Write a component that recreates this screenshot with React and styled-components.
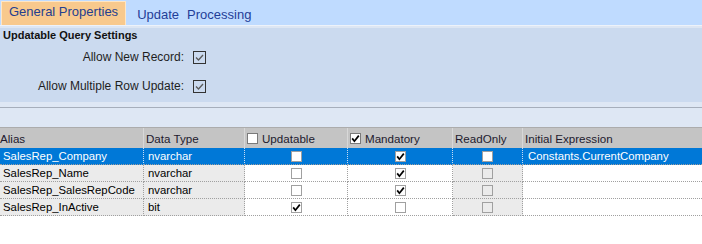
import React from "react"
import styled, { createGlobalStyle } from "styled-components"

const GlobalStyle = createGlobalStyle`
  html, body {
    margin: 0;
    padding: 0;
    background: #ffffff;
  }
  body {
    font-family: "Liberation Sans", Arial, sans-serif;
    width: 702px;
    height: 244px;
    overflow: hidden;
  }
`

const columns = "144px 101px 103px 105px 70px 1fr"

const rows = [
  { alias: "SalesRep_Company", type: "nvarchar", updatable: false, mandatory: true, readOnly: false, expr: "Constants.CurrentCompany", selected: true },
  { alias: "SalesRep_Name", type: "nvarchar", updatable: false, mandatory: true, readOnly: false, expr: "" },
  { alias: "SalesRep_SalesRepCode", type: "nvarchar", updatable: false, mandatory: true, readOnly: false, expr: "" },
  { alias: "SalesRep_InActive", type: "bit", updatable: true, mandatory: false, readOnly: false, expr: "" },
]

const GridCheck = ({ checked, selected }) => (
  <GridBox $selected={selected}>
    {checked && (
      <svg width="9" height="9" viewBox="0 0 9 9">
        <path d="M1.2 4.4 L3.4 7.2 L7.8 1.6" fill="none" stroke="#000" strokeWidth="1.7" />
      </svg>
    )}
  </GridBox>
)

const SettingCheck = () => (
  <SettingBox>
    <svg width="11" height="11" viewBox="0 0 11 11">
      <polyline points="2,5.5 4.5,8 9,3" fill="none" stroke="#5a5a5a" strokeWidth="1.3" />
    </svg>
  </SettingBox>
)

const App = () => (
  <Page>
    <GlobalStyle />
    <TabStrip>
      <ActiveTab>General Properties</ActiveTab>
      <Tab>Update</Tab>
      <Tab>Processing</Tab>
    </TabStrip>
    <StripEdge />
    <SettingsPanel>
      <PanelTitle>Updatable Query Settings</PanelTitle>
      <SettingsForm>
        <SettingLabel>Allow New Record:</SettingLabel>
        <SettingCheck />
        <SettingLabel>Allow Multiple Row Update:</SettingLabel>
        <SettingCheck />
      </SettingsForm>
    </SettingsPanel>
    <PanelFooter />
    <GroupStrip />
    <Grid>
      <HeaderRow>
        <HeaderCell $pad={0}>Alias</HeaderCell>
        <HeaderCell>Data Type</HeaderCell>
        <HeaderCell>
          <HeaderBox />
          Updatable
        </HeaderCell>
        <HeaderCell>
          <HeaderBox>
            <svg width="9" height="9" viewBox="0 0 9 9">
              <path d="M1.2 4.4 L3.4 7.2 L7.8 1.6" fill="none" stroke="#000" strokeWidth="1.7" />
            </svg>
          </HeaderBox>
          Mandatory
        </HeaderCell>
        <HeaderCell>ReadOnly</HeaderCell>
        <HeaderCell $last>Initial Expression</HeaderCell>
      </HeaderRow>
      {rows.map((r) => (
        <DataRow key={r.alias} $selected={r.selected}>
          <Cell $gray $selected={r.selected}>{r.alias}</Cell>
          <Cell $gray $selected={r.selected} $pad={4}>{r.type}</Cell>
          <Cell $center $selected={r.selected}>
            <GridCheck checked={r.updatable} selected={r.selected} />
          </Cell>
          <Cell $center $selected={r.selected}>
            <GridCheck checked={r.mandatory} selected={r.selected} />
          </Cell>
          <Cell $center $gray $selected={r.selected}>
            <GridCheck checked={r.readOnly} selected={r.selected} />
          </Cell>
          <Cell $last $selected={r.selected} $pad={5}>{r.expr}</Cell>
        </DataRow>
      ))}
    </Grid>
  </Page>
)

export default App

const Page = styled.div`
  width: 702px;
  height: 244px;
  background: #ffffff;
  display: flex;
  flex-direction: column;
`

const TabStrip = styled.div`
  height: 25px;
  background: #bfdbff;
  display: flex;
  align-items: flex-start;
  padding-left: 1px;
`

const ActiveTab = styled.div`
  box-sizing: border-box;
  height: 24px;
  margin-top: 1px;
  margin-right: 7px;
  padding: 2px 7px 0;
  line-height: 15px;
  font-size: 13px;
  color: #253f8f;
  background: #f8c98d;
  border: 1px solid #ffe6c4;
  border-bottom: 0;
  white-space: nowrap;
`

const Tab = styled.div`
  padding: 7px 4px 0;
  line-height: 15px;
  font-size: 13px;
  color: #1f3e98;
  white-space: nowrap;
`

const StripEdge = styled.div`
  height: 2px;
  background: #dde6f3;
  border-top: 1px solid #edf2fa;
`

const SettingsPanel = styled.div`
  height: 74px;
  box-sizing: border-box;
  background: #cbdaef;
  padding-top: 1px;
`

const PanelTitle = styled.div`
  padding-left: 3px;
  font-size: 11px;
  font-weight: bold;
  line-height: 13px;
  color: #111;
`

const SettingsForm = styled.div`
  display: grid;
  grid-template-columns: 184px 13px;
  grid-auto-rows: 13px;
  column-gap: 9px;
  row-gap: 16px;
  margin-top: 9px;
  align-items: center;
`

const SettingLabel = styled.div`
  text-align: right;
  font-size: 12px;
  line-height: 13px;
  color: #1e1e1e;
  white-space: nowrap;
`

const SettingBox = styled.div`
  box-sizing: border-box;
  width: 13px;
  height: 13px;
  border: 1px solid #333;
  display: flex;
  align-items: center;
  justify-content: center;
`

const PanelFooter = styled.div`
  height: 5px;
  background: #dee7f4;
  border-bottom: 1px solid #a6aebb;
`

const GroupStrip = styled.div`
  height: 19px;
  background: #dee7f4;
  border-bottom: 1px solid #acacac;
`

const Grid = styled.div`
  display: flex;
  flex-direction: column;
  font-size: 11.35px;
`

const HeaderRow = styled.div`
  display: grid;
  grid-template-columns: ${columns};
  height: 20px;
  background: #c4c4c4;
`

const HeaderCell = styled.div`
  display: flex;
  align-items: center;
  gap: 4px;
  padding-left: ${(p) => (p.$pad ?? 2)}px;
  font-size: 11.6px;
  color: #1d1a2e;
  white-space: nowrap;
  overflow: hidden;
  border-right: ${(p) => (p.$last ? "0" : "1px solid #d8d8d8")};
`

const HeaderBox = styled.div`
  box-sizing: border-box;
  width: 11px;
  height: 11px;
  flex: none;
  background: #fff;
  border: 1px solid #7a7a7a;
  display: flex;
  align-items: center;
  justify-content: center;
`

const DataRow = styled.div`
  display: grid;
  grid-template-columns: ${columns};
  height: 17px;
`

const Cell = styled.div`
  box-sizing: border-box;
  display: flex;
  align-items: center;
  justify-content: ${(p) => (p.$center ? "center" : "flex-start")};
  padding-left: ${(p) => (p.$center ? 0 : p.$pad ?? 3)}px;
  line-height: 16px;
  white-space: nowrap;
  overflow: hidden;
  color: ${(p) => (p.$selected ? "#ffffff" : "#000000")};
  background: ${(p) => (p.$selected ? "#0078d7" : p.$gray ? "#ebebeb" : "#ffffff")};
  border-bottom: 1px dotted #a0a0a0;
  border-right: ${(p) => (p.$last ? "0" : p.$selected ? "1px dotted #c8dcf2" : "1px dotted #a0a0a0")};
`

const GridBox = styled.div`
  box-sizing: border-box;
  width: 11px;
  height: 11px;
  background: ${(p) => (p.$selected ? "#ffffff" : "transparent")};
  border: 1px solid #a0a0a0;
  display: flex;
  align-items: center;
  justify-content: center;
`
